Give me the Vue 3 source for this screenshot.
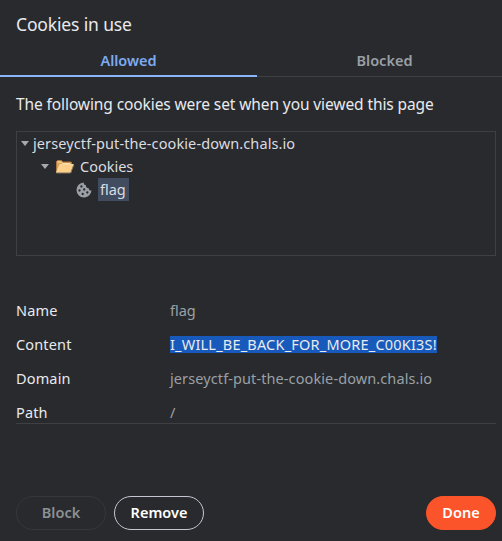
<script setup>
const details = [
  { label: 'Name', value: 'flag', kind: 'name' },
  { label: 'Content', value: 'I_WILL_BE_BACK_FOR_MORE_C00KI3S!', kind: 'content' },
  { label: 'Domain', value: 'jerseyctf-put-the-cookie-down.chals.io', kind: 'domain' },
  { label: 'Path', value: '/', kind: 'path' },
]
</script>

<template>
  <main class="dialog">
    <h1 class="title"><span>Cookies in use</span></h1>
    <nav class="tabs">
      <button class="tab active"><span>Allowed</span></button>
      <button class="tab"><span>Blocked</span></button>
    </nav>
    <p class="intro"><span>The following cookies were set when you viewed this page</span></p>

    <section class="tree">
      <div class="node host">
        <svg class="arrow" viewBox="0 0 8 5"><path d="M0 0h8L4 5z" /></svg>
        <span class="host-name">jerseyctf-put-the-cookie-down.chals.io</span>
      </div>
      <div class="node folder">
        <svg class="arrow" viewBox="0 0 8 5"><path d="M0 0h8L4 5z" /></svg>
        <svg class="folder-icon" viewBox="0 0 20 16">
          <path d="M1.5 13V2.500l1-1h4l1 1.500h8.500l.5.5v9.500z" fill="#dca45b" stroke="#ad7740" />
          <path d="M2.500 3h4l1 1.500H15" fill="none" stroke="#ffe0a0" />
          <path d="M1.500 13.500 5 5.500h13.500l-3 8z" fill="#ffd08a" stroke="#f7e1b4" stroke-width=".8" />
          <path d="M1.500 14h14L18.800 6" fill="none" stroke="#87704f" />
        </svg>
        <span class="folder-name">Cookies</span>
      </div>
      <div class="node leaf">
        <svg class="cookie-icon" viewBox="0 0 16 16">
          <path d="M7.700.5a7.500 7.500 0 1 0 7.800 8c-1.700.2-2.800-.7-2.700-2.300-1.900.1-3.100-1.100-2.800-2.900C8.500 3.100 7.600 2 7.700.5z" fill="#9aa0a6" />
          <g fill="#292a2d">
            <circle cx="5.400" cy="4.500" r="1.150" /><circle cx="3.500" cy="8.500" r="1.150" />
            <circle cx="8.200" cy="7.500" r="1.150" /><circle cx="6.700" cy="12" r="1.150" />
            <circle cx="11.300" cy="10.500" r="1.150" />
          </g>
        </svg>
        <span class="selected">flag</span>
      </div>
    </section>

    <dl class="details">
      <div v-for="row in details" :key="row.label" class="row">
        <dt>{{ row.label }}</dt>
        <dd><span :class="row.kind">{{ row.value }}</span></dd>
      </div>
    </dl>

    <footer class="actions">
      <button class="btn block" disabled>Block</button>
      <button class="btn remove">Remove</button>
      <button class="btn done">Done</button>
    </footer>
  </main>
</template>

<style>
body { margin: 0; background: #292a2d; }
</style>

<style scoped>
.dialog {
  box-sizing: border-box;
  width: 502px;
  height: 541px;
  overflow: hidden;
  display: flex;
  flex-direction: column;
  background: #292a2d;
  color: #e8eaed;
  font-family: "Noto Sans", "Open Sans", sans-serif;
  font-size: 14.5px;
  white-space: nowrap;
}
.title {
  margin: 0;
  padding: 12px 16px 0;
  height: 34px;
  font-size: 17.5px;
  font-weight: 400;
  line-height: 25px;
  letter-spacing: -.15px;
}
.tabs { display: flex; height: 31px; }
.tab {
  box-sizing: border-box;
  flex: 0 0 257px;
  height: 31px;
  padding: 0 0 1px;
  border: 0;
  border-bottom: 2px solid #8ab4f8;
  background: none;
  color: #9aa0a6;
  font: 600 14.5px/28px "Noto Sans", sans-serif;
}
.tab.active { color: #7dabf3; }
.tab:last-child {
  flex: 1;
  padding: 0 0 2px 10px;
  border-bottom: 1px solid #3f4042;
}
.intro {
  margin: 0;
  padding: 15px 16px 0;
  height: 39px;
  font-size: 15.5px;
  line-height: 24px;
  letter-spacing: -.1px;
}
.tree {
  box-sizing: border-box;
  width: 480px;
  height: 125px;
  margin-left: 16px;
  border: 1px solid #3f4042;
  color: #dadce0;
}
.node { display: flex; align-items: center; height: 23px; line-height: 23px; }
.arrow { width: 8px; height: 5px; fill: #a7a9ac; }
.host { padding-left: 4px; gap: 4px; }
.host-name, .domain { letter-spacing: .1px; }
.folder { padding-left: 24px; }
.folder-icon { width: 20px; height: 16px; margin: 0 5px 0 6px; }
.leaf { padding-left: 59px; }
.cookie-icon { width: 16px; height: 16px; margin-right: 6px; }
.selected {
  box-sizing: border-box;
  width: 31px;
  padding-left: 2px;
  background: #414c60;
}
.details {
  box-sizing: border-box;
  width: 480px;
  height: 131px;
  margin: 37px 0 0 16px;
  overflow: hidden;
  border-bottom: 1px solid #3f4042;
}
.row { display: flex; align-items: center; height: 34px; line-height: 17px; }
dt { width: 154px; letter-spacing: .15px; }
dd { margin: 0; color: #9aa0a6; }
dd span { display: block; }
.content {
  width: 267px;
  height: 17px;
  background: #185abc;
  color: #e8eaed;
  letter-spacing: .2px;
}
.actions { display: flex; gap: 8px; padding: 72px 6px 0 16px; }
.btn {
  box-sizing: border-box;
  width: 90px;
  height: 34px;
  padding: 0 0 2px;
  border: 1px solid #c5c6d4;
  border-radius: 17px;
  background: none;
  color: #fff;
  font: 600 14.5px/30px "Noto Sans", sans-serif;
}
.block { border-color: #36373a; color: #8c9196; }
.done { width: 70px; margin-left: auto; border-color: #fb542b; background: #fb542b; }
</style>
